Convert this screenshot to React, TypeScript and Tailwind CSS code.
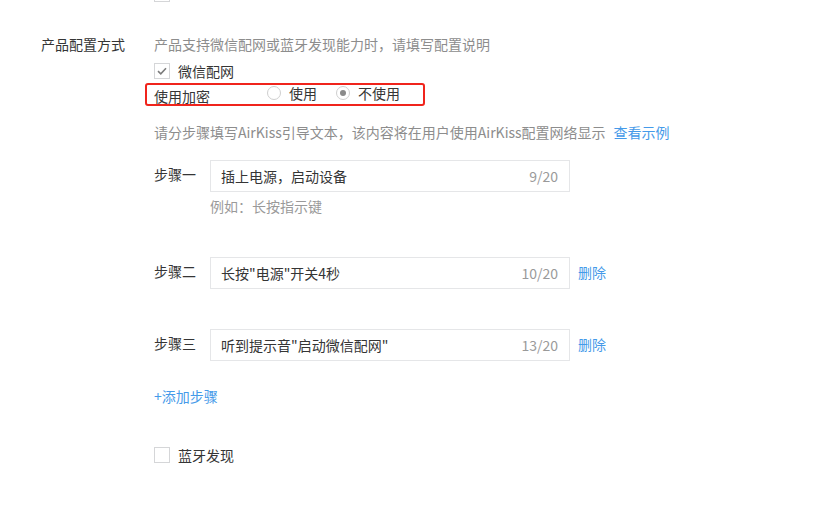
import React from "react";

const font = { fontFamily: '"Noto Sans CJK SC", "Noto Sans", sans-serif' };

function Checkbox({ checked }: { checked?: boolean }) {
  return (
    <span className="w-4 h-4 border border-[#d5d6d8] bg-white flex items-center justify-center shrink-0">
      {checked && (
        <svg width="10" height="8" viewBox="0 0 10 8">
          <path d="M1 4.2 L3.8 6.8 L9 1.2" fill="none" stroke="#7c7c7c" strokeWidth="1.6" />
        </svg>
      )}
    </span>
  );
}

function Radio({ checked }: { checked?: boolean }) {
  return (
    <span className="w-[14px] h-[14px] rounded-full border border-[#cfcfcf] bg-white flex items-center justify-center shrink-0">
      {checked && <span className="w-[6px] h-[6px] rounded-full bg-[#8a8a8a]" />}
    </span>
  );
}

function Step({ label, value, count, del }: { label: string; value: string; count: string; del?: boolean }) {
  return (
    <div className="flex items-start h-8">
      <span className="w-[56px] mt-[4px] text-[14px] leading-5 text-[#353535]">{label}</span>
      <div className="w-[360px] h-8 border border-[#e5e6e8] flex items-center justify-between pl-[10px] pr-[11px]">
        <span className="text-[14px] leading-5 text-[#353535]">{value}</span>
        <span className="text-[14px] leading-5 text-[#9a9a9a]">{count}</span>
      </div>
      {del && <span className="ml-2 mt-[5px] text-[14px] leading-5 text-[#459ae9]">删除</span>}
    </div>
  );
}

export default function App() {
  return (
    <div className="w-[833px] h-[506px] bg-white overflow-hidden" style={font}>
      <div className="pl-[154px] -mt-[14px]">
        <Checkbox />
      </div>
      <div className="flex mt-[32px] pl-[41px]">
        <div className="w-[113px] text-[14px] leading-5 text-[#353535]">产品配置方式</div>
        <div className="flex flex-col">
          <div className="text-[14px] leading-5 text-[#8d8d8d]">产品支持微信配网或蓝牙发现能力时，请填写配置说明</div>
          <div className="flex items-center mt-[9px] h-4">
            <Checkbox checked />
            <span className="ml-2 text-[14px] leading-5 text-[#353535]">微信配网</span>
          </div>
          <div className="-ml-[9px] mt-[4px] w-[280px] h-[23px] border-2 border-[#f0241c] rounded-[3px] flex items-start pl-[7px]">
            <span className="mt-[1px] text-[14px] leading-5 text-[#353535]">使用加密</span>
            <div className="flex items-center ml-[57px] mt-[1px] h-[14px]">
              <Radio />
              <span className="ml-2 text-[14px] leading-5 text-[#353535]">使用</span>
              <span className="ml-[19px]"><Radio checked /></span>
              <span className="ml-2 text-[14px] leading-5 text-[#353535]">不使用</span>
            </div>
          </div>
          <div className="mt-[16px] text-[14px] leading-5 text-[#8d8d8d] whitespace-nowrap">
            请分步骤填写AirKiss引导文本，该内容将在用户使用AirKiss配置网络显示
            <span className="ml-2 text-[#459ae9]">查看示例</span>
          </div>
          <div className="mt-[18px]">
            <Step label="步骤一" value="插上电源，启动设备" count="9/20" />
          </div>
          <div className="mt-[4px] pl-[56px] text-[14px] leading-5 text-[#9a9a9a]">例如：长按指示键</div>
          <div className="mt-[41px]">
            <Step label="步骤二" value={'长按"电源"开关4秒'} count="10/20" del />
          </div>
          <div className="mt-[40px]">
            <Step label="步骤三" value={'听到提示音"启动微信配网"'} count="13/20" del />
          </div>
          <div className="mt-[25px] text-[14px] leading-5 text-[#459ae9]">+添加步骤</div>
          <div className="flex items-center mt-[41px] h-4">
            <Checkbox />
            <span className="ml-2 text-[14px] leading-5 text-[#353535]">蓝牙发现</span>
          </div>
        </div>
      </div>
    </div>
  );
}
